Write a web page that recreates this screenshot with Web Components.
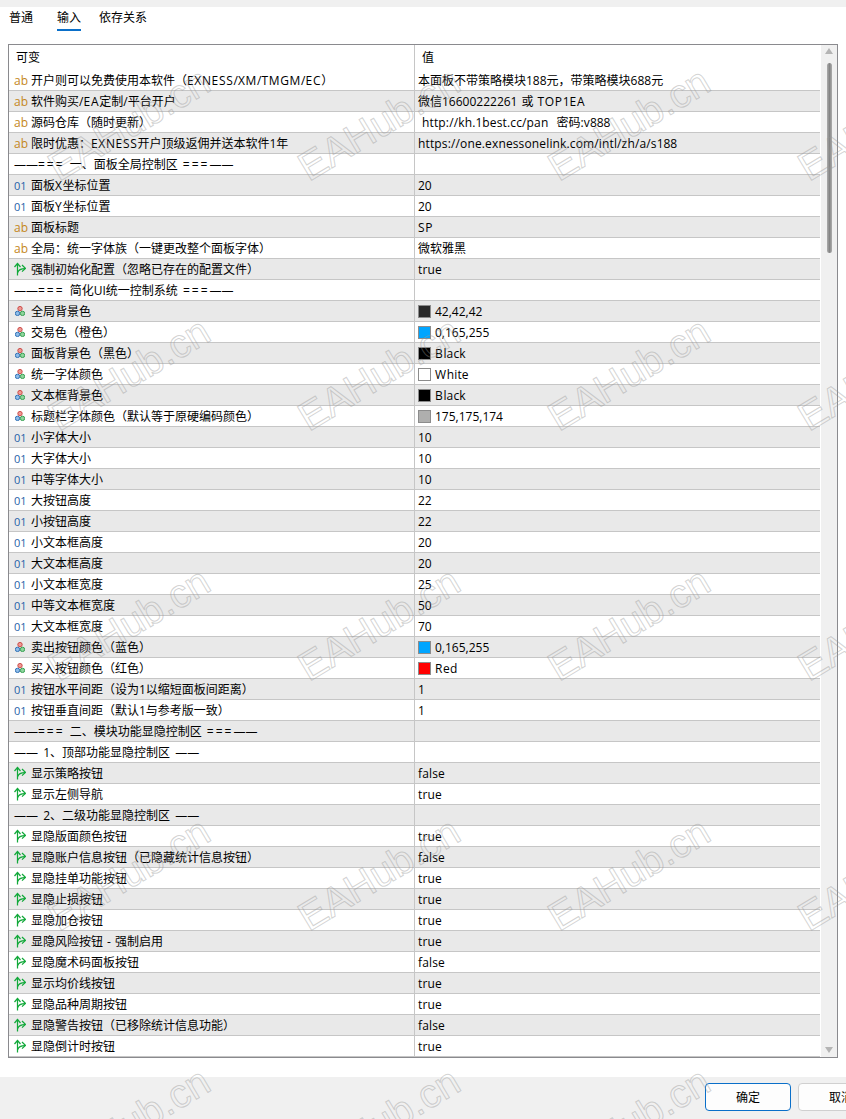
<!DOCTYPE html>
<html lang="zh">
<head>
<meta charset="utf-8">
<style>
  html, body { margin: 0; padding: 0; background: #fff; }
  body { font: 12px "Open Sans", "Noto Sans CJK SC", sans-serif; color: #000; overflow: hidden; }
</style>
</head>
<body>
<input-dialog></input-dialog>

<script>
const SECTION = 's';

// type, name, value, swatch colour
const ROWS = [
  ['ab', '开户则可以免费使用本软件（EXNESS/XM/TMGM/EC）', '本面板不带策略模块188元，带策略模块688元'],
  ['ab', '软件购买/EA定制/平台开户', '微信16600222261 或 TOP1EA'],
  ['ab', '源码仓库（随时更新）', ' http://kh.1best.cc/pan  密码:v888'],
  ['ab', '限时优惠：EXNESS开户顶级返佣并送本软件1年', 'https://one.exnessonelink.com/intl/zh/a/s188'],
  [SECTION, '——=== 一、面板全局控制区 ===——', ''],
  ['01', '面板X坐标位置', '20'],
  ['01', '面板Y坐标位置', '20'],
  ['ab', '面板标题', 'SP'],
  ['ab', '全局：统一字体族（一键更改整个面板字体）', '微软雅黑'],
  ['bool', '强制初始化配置（忽略已存在的配置文件）', 'true'],
  [SECTION, '——=== 简化UI统一控制系统 ===——', ''],
  ['color', '全局背景色', '42,42,42', '#2a2a2a'],
  ['color', '交易色（橙色）', '0,165,255', '#00a5ff'],
  ['color', '面板背景色（黑色）', 'Black', '#000'],
  ['color', '统一字体颜色', 'White', '#fff'],
  ['color', '文本框背景色', 'Black', '#000'],
  ['color', '标题栏字体颜色（默认等于原硬编码颜色）', '175,175,174', '#afafae'],
  ['01', '小字体大小', '10'],
  ['01', '大字体大小', '10'],
  ['01', '中等字体大小', '10'],
  ['01', '大按钮高度', '22'],
  ['01', '小按钮高度', '22'],
  ['01', '小文本框高度', '20'],
  ['01', '大文本框高度', '20'],
  ['01', '小文本框宽度', '25'],
  ['01', '中等文本框宽度', '50'],
  ['01', '大文本框宽度', '70'],
  ['color', '卖出按钮颜色（蓝色）', '0,165,255', '#00a5ff'],
  ['color', '买入按钮颜色（红色）', 'Red', '#f00'],
  ['01', '按钮水平间距（设为1以缩短面板间距离）', '1'],
  ['01', '按钮垂直间距（默认1与参考版一致）', '1'],
  [SECTION, '——=== 二、模块功能显隐控制区 ===——', ''],
  [SECTION, '—— 1、顶部功能显隐控制区 ——', ''],
  ['bool', '显示策略按钮', 'false'],
  ['bool', '显示左侧导航', 'true'],
  [SECTION, '—— 2、二级功能显隐控制区 ——', ''],
  ['bool', '显隐版面颜色按钮', 'true'],
  ['bool', '显隐账户信息按钮（已隐藏统计信息按钮）', 'false'],
  ['bool', '显隐挂单功能按钮', 'true'],
  ['bool', '显隐止损按钮', 'true'],
  ['bool', '显隐加仓按钮', 'true'],
  ['bool', '显隐风险按钮 - 强制启用', 'true'],
  ['bool', '显隐魔术码面板按钮', 'false'],
  ['bool', '显示均价线按钮', 'true'],
  ['bool', '显隐品种周期按钮', 'true'],
  ['bool', '显隐警告按钮（已移除统计信息功能）', 'false'],
  ['bool', '显隐倒计时按钮', 'true'],
];

// Latin runs need a little tracking to reach the width of the original UI font
function tracked(text, section) {
  if (section) return text.replace(/[= ]+/g, m => `<span class="e">${m}</span>`);
  return text.replace(/[A-Z]+|[a-z:\/.]+| +/g, m => {
    const cls = m[0] === ' ' ? 'w' : /[A-Z]/.test(m[0]) ? 'u' : 'l';
    return `<span class="${cls}">${m}</span>`;
  });
}

class TypeIcon extends HTMLElement {
  connectedCallback() {
    const type = this.getAttribute('type');
    let inner = '';
    if (type === 'ab') inner = '<span class="ab">ab</span>';
    if (type === '01') inner = '<span class="num">01</span>';
    if (type === 'bool') inner = `<svg class="bool" width="13" height="14" viewBox="0 0 13 14" fill="none" stroke="#12a93a" stroke-width="1.25">
        <path d="M4.5 13.5V1.5"/><path d="M1.5 5 4.5 1.5 7.5 5"/>
        <path d="M4.7 10.5C5.4 8 7.5 6.5 12 6.5"/><path d="M9 3 12.4 6.4 9 9.6"/></svg>`;
    if (type === 'color') inner = `<svg class="color" width="10" height="10" viewBox="0 0 10 10" stroke-width=".9">
        <circle cx="5" cy="2.6" r="2.2" fill="#ee9a94" stroke="#c8403c"/>
        <circle cx="2.5" cy="7.4" r="2.2" fill="#8fbce8" stroke="#2468b0"/>
        <circle cx="7.5" cy="7.4" r="2.2" fill="#8ed49c" stroke="#2a9a48"/></svg>`;
    this.attachShadow({ mode: 'open' });
    this.shadowRoot.innerHTML = `
      <style>
        :host { display: flex; align-items: center; justify-content: flex-start; width: 17px; margin-left: 5px; flex: none; }
        .ab { color: #c4871c; font: 12px "Open Sans", sans-serif; }
        .num { color: #1f62a8; font: 11px "Open Sans", sans-serif; }
        svg { display: block; }
        .bool { margin-left: -1px; }
        .color { margin-left: 1px; }
      </style>
      ${inner}
    `;
  }
}
customElements.define('type-icon', TypeIcon);

class ParamRow extends HTMLElement {
  connectedCallback() {
    const swatch = this.getAttribute('swatch');
    const type = this.getAttribute('type');
    this.attachShadow({ mode: 'open' });
    this.shadowRoot.innerHTML = `
      <style>
        :host {
          display: grid;
          grid-template-columns: 406px 1fr;
          height: 21px;
          box-sizing: border-box;
          border-bottom: 1px solid #c6c6c6;
          white-space: pre;
        }
        :host([shade]) { background: #e9e9e9; }
        .name { display: flex; align-items: center; border-right: 1px solid #c6c6c6; overflow: hidden; }
        .section { padding-left: 5px; }
        .value { display: flex; align-items: center; padding-left: 3px; overflow: hidden; }
        .swatch { width: 11px; height: 11px; border: 1px solid #8c8c8c; margin-right: 4px; flex: none; }
      </style>
      <div class="name">
        ${type === SECTION ? '' : `<type-icon type="${type}"></type-icon>`}
        <span class="${type === SECTION ? 'section' : ''}"><slot name="name"></slot></span>
      </div>
      <div class="value">
        ${swatch ? `<span class="swatch" style="background:${swatch}"></span>` : ''}
        <slot name="value"></slot>
      </div>
    `;
  }
}
customElements.define('param-row', ParamRow);

class ParamTable extends HTMLElement {
  connectedCallback() {
    this.attachShadow({ mode: 'open' });
    this.shadowRoot.innerHTML = `
      <style>
        :host {
          display: grid;
          grid-template-columns: 1fr 17px;
          margin: 0 8px;
          height: 1014px;
          box-sizing: border-box;
          border: 1px solid #8a8a8e;
          overflow: hidden;
        }
        .main { overflow: hidden; min-width: 0; }
        .head { display: grid; grid-template-columns: 406px 1fr; height: 25px; align-items: center; }
        .head span { padding-left: 7px; border-right: 1px solid #c6c6c6; height: 25px; line-height: 26px; box-sizing: border-box; }
        .head span + span { border: 0; }
        .bar { background: #f0f0f0; margin-left: 1px; position: relative; display: flex; justify-content: center; }
        .thumb { width: 5px; height: 190px; margin-top: 18px; border-radius: 3px; background: linear-gradient(90deg, #adadad, #858585 50%, #adadad); }
        .up, .down { position: absolute; left: 4px; width: 0; height: 0; border: 4px solid transparent; }
        .up { top: 3px; border-bottom: 6px solid #b4b4b4; border-top: 0; }
        .down { bottom: 4px; border-top: 6px solid #b4b4b4; border-bottom: 0; }
      </style>
      <div class="main">
        <div class="head"><span>可变</span><span>值</span></div>
        <slot></slot>
      </div>
      <div class="bar"><i class="up"></i><i class="thumb"></i><i class="down"></i></div>
    `;
  }
}
customElements.define('param-table', ParamTable);

class TabBar extends HTMLElement {
  connectedCallback() {
    this.attachShadow({ mode: 'open' });
    this.shadowRoot.innerHTML = `
      <style>
        :host { display: flex; height: 22px; padding-left: 9px; }
        span { height: 22px; line-height: 18px; box-sizing: border-box; }
        .plain { margin-right: 24px; }
        .on { margin-right: 18px; border-bottom: 2px solid #0a6fc9; }
      </style>
      <span class="plain">普通</span><span class="on">输入</span><span>依存关系</span>
    `;
  }
}
customElements.define('tab-bar', TabBar);

class DialogFooter extends HTMLElement {
  connectedCallback() {
    this.attachShadow({ mode: 'open' });
    this.shadowRoot.innerHTML = `
      <style>
        :host { display: flex; gap: 7px; height: 42px; box-sizing: border-box; padding: 6px 0 0 705px; background: #f0f0f0; overflow: hidden; }
        button {
          flex: none; width: 86px; height: 28px; box-sizing: border-box; padding: 0;
          font: inherit; color: #000; background: #fdfdfd;
          border: 1px solid #d0d0d0; border-radius: 4px;
        }
        .primary { border-color: #0a6fc9; }
      </style>
      <button class="primary">确定</button><button>取消</button>
    `;
  }
}
customElements.define('dialog-footer', DialogFooter);

class WaterMarks extends HTMLElement {
  connectedCallback() {
    this.attachShadow({ mode: 'open' });
    let marks = '';
    for (const top of [124, 374, 624, 874, 1124]) {
      for (const left of [129, 379, 629, 879]) {
        marks += `<b style="left:${left}px;top:${top}px">EAHub.cn</b>`;
      }
    }
    this.shadowRoot.innerHTML = `
      <style>
        :host { position: absolute; inset: 0; overflow: hidden; pointer-events: none; }
        b {
          position: absolute;
          transform: translate(-50%, -50%) rotate(-31deg);
          font: 400 40px "Liberation Sans", sans-serif;
          color: transparent;
          -webkit-text-stroke: 1px rgba(150, 150, 150, .42);
          white-space: nowrap;
        }
      </style>
      ${marks}
    `;
  }
}
customElements.define('water-marks', WaterMarks);

class InputDialog extends HTMLElement {
  connectedCallback() {
    this.attachShadow({ mode: 'open' });
    this.shadowRoot.innerHTML = `
      <style>
        :host { display: flex; flex-direction: column; position: relative; width: 846px; height: 1119px; overflow: hidden; }
        .top { height: 7px; background: #f0f0f0; }
        tab-bar { margin: 2px 0 13px; }
        .space { height: 19px; }
        .u { letter-spacing: .65px; }
        .l { letter-spacing: .14px; }
        .w { letter-spacing: .9px; }
        .e { letter-spacing: 2px; }
      </style>
      <div class="top"></div>
      <tab-bar></tab-bar>
      <param-table id="table"></param-table>
      <div class="space"></div>
      <dialog-footer></dialog-footer>
      <water-marks></water-marks>
    `;
    const table = this.shadowRoot.getElementById('table');
    ROWS.forEach((r, i) => {
      const row = document.createElement('param-row');
      row.setAttribute('type', r[0]);
      if (r[3]) row.setAttribute('swatch', r[3]);
      if (i % 2) row.setAttribute('shade', '');
      const name = document.createElement('span');
      name.slot = 'name';
      name.innerHTML = tracked(r[1], r[0] === SECTION);
      const value = document.createElement('span');
      value.slot = 'value';
      value.innerHTML = tracked(r[2], false);
      row.append(name, value);
      table.append(row);
    });
  }
}
customElements.define('input-dialog', InputDialog);
</script>
</body>
</html>
